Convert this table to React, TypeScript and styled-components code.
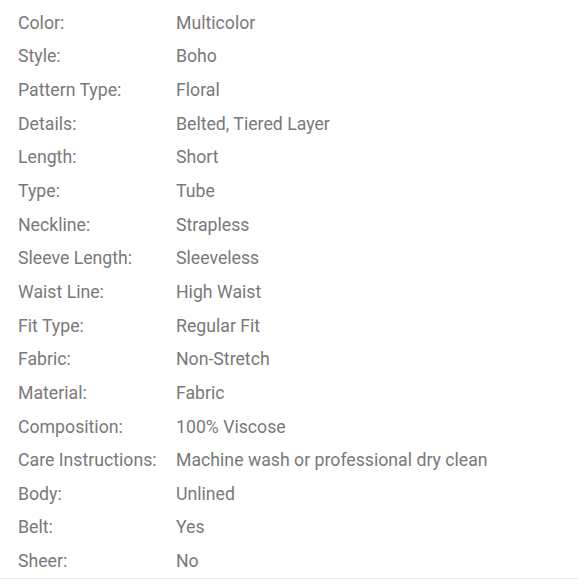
import React from 'react';
import styled, { createGlobalStyle } from 'styled-components';

const GlobalStyle = createGlobalStyle`
  body {
    margin: 0;
    background: #fff;
    font-family: Roboto, "Liberation Sans", sans-serif;
  }
`;

const specs: [string, string][] = [
  ['Color', 'Multicolor'],
  ['Style', 'Boho'],
  ['Pattern Type', 'Floral'],
  ['Details', 'Belted, Tiered Layer'],
  ['Length', 'Short'],
  ['Type', 'Tube'],
  ['Neckline', 'Strapless'],
  ['Sleeve Length', 'Sleeveless'],
  ['Waist Line', 'High Waist'],
  ['Fit Type', 'Regular Fit'],
  ['Fabric', 'Non-Stretch'],
  ['Material', 'Fabric'],
  ['Composition', '100% Viscose'],
  ['Care Instructions', 'Machine wash or professional dry clean'],
  ['Body', 'Unlined'],
  ['Belt', 'Yes'],
  ['Sheer', 'No'],
];

const SpecList = styled.div`
  padding: 6px 0 0 18px;
  border-bottom: 1px solid #ebebeb;
`;

const SpecRow = styled.div`
  display: grid;
  grid-template-columns: 158px 1fr;
  height: 33.65px;
  align-items: center;
  font-size: 17.7px;
  color: #797979;
`;

const Label = styled.span``;

const Value = styled.span``;

const App: React.FC = () => {
  return (
    <>
      <GlobalStyle />
      <SpecList>
        {specs.map(([label, value]) => (
          <SpecRow key={label}>
            <Label>{label}:</Label>
            <Value>{value}</Value>
          </SpecRow>
        ))}
      </SpecList>
    </>
  );
};

export default App;
